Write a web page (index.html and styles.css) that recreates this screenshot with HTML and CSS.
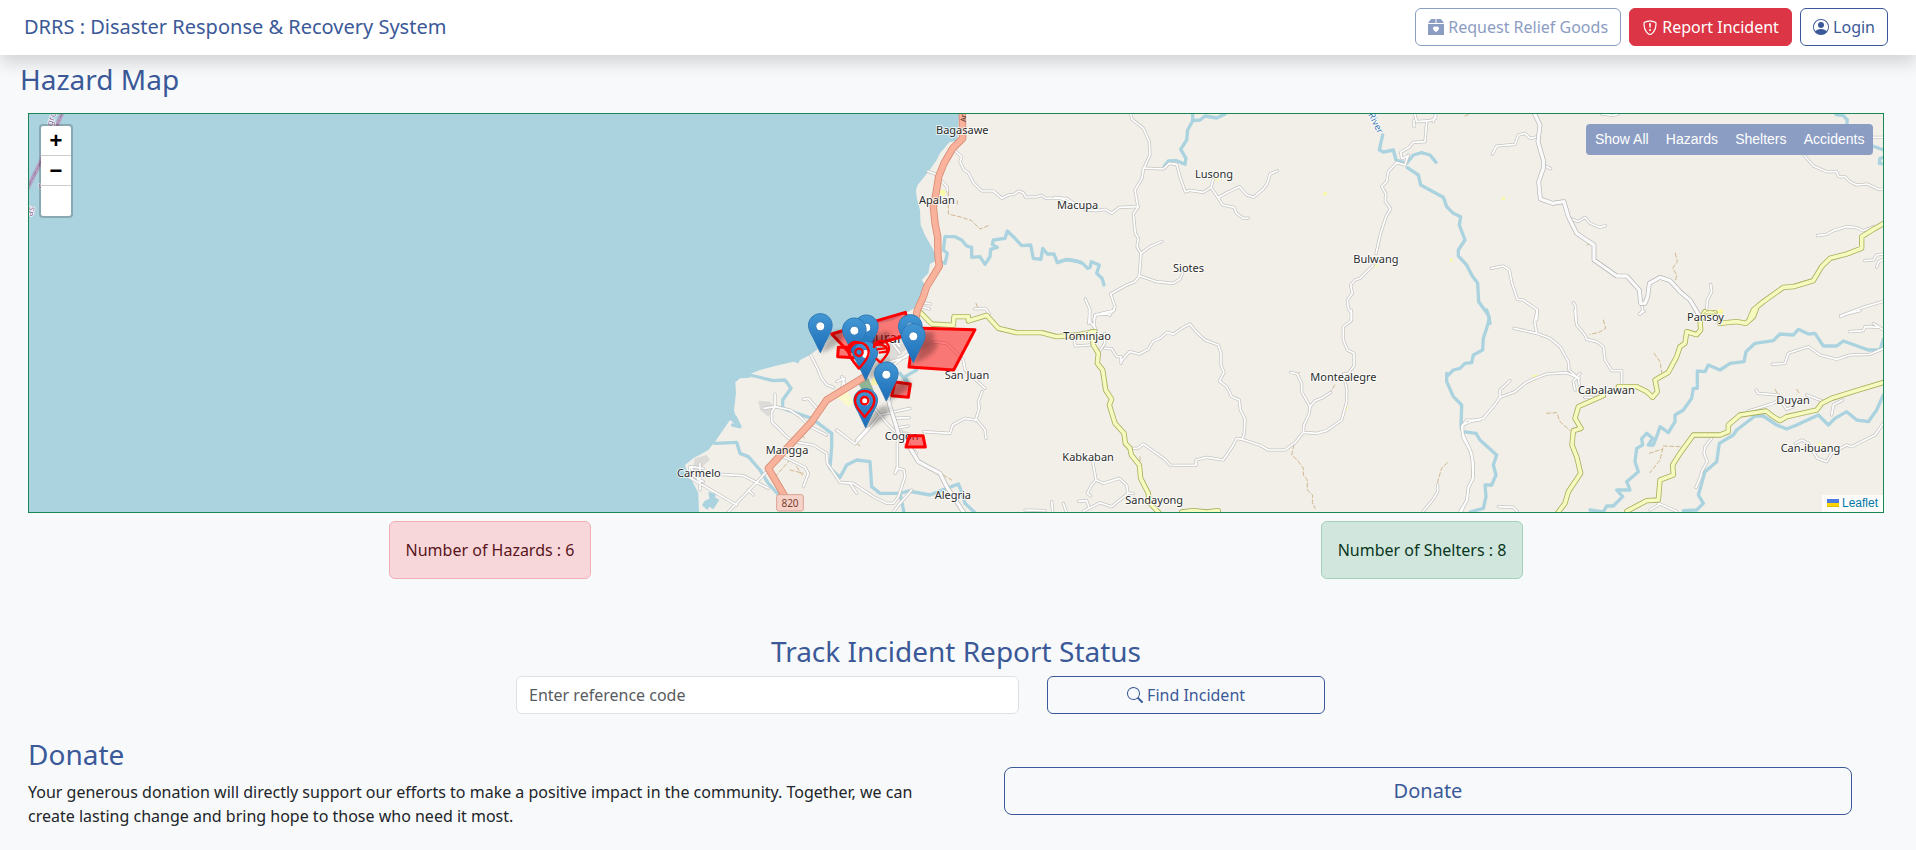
FILE: index.html
```html
<!DOCTYPE html>
<html lang="en">
<head>
<meta charset="utf-8">
<title>DRRS : Disaster Response &amp; Recovery System</title>
<link rel="stylesheet" href="styles.css">
</head>
<body>
<header class="navbar">
  <a class="brand">DRRS : Disaster Response &amp; Recovery System</a>
  <nav class="nav-actions">
    <button class="btn btn-muted"><svg class="icon" viewBox="0 0 16 16"><path fill-rule="evenodd" d="M3.75 0h3.75v4H.1a1.5 1.5 0 0 1 .25-.5L2.6.6A1.5 1.5 0 0 1 3.75 0ZM8.500 0h3.750a1.500 1.500 0 0 1 1.150.6l2.250 2.900q.17.23.25.5H8.500ZM0 5h16v11H0ZM8 7.990c-1.660-1.710-5.820 1.280 0 5.130 5.820-3.850 1.660-6.840 0-5.130Z"/></svg> Request Relief Goods</button>
    <button class="btn btn-danger"><svg class="icon" viewBox="0 0 16 16"><path d="M5.338 1.590a61 61 0 0 0-2.837.856.480.480 0 0 0-.328.390c-.554 4.157.726 7.190 2.253 9.188a10.700 10.700 0 0 0 2.287 2.233c.346.244.652.420.893.533q.180.085.293.118a1 1 0 0 0 .101.025 1 1 0 0 0 .100-.025q.114-.034.294-.118c.240-.113.547-.290.893-.533a10.700 10.700 0 0 0 2.287-2.233c1.527-1.997 2.807-5.031 2.253-9.188a.480.480 0 0 0-.328-.390c-.651-.213-1.750-.560-2.837-.855C9.552 1.290 8.531 1.067 8 1.067c-.530 0-1.552.223-2.662.524z" transform="translate(0 .8)" fill="none" stroke="currentColor" stroke-width="1.200"/><path d="M7.001 11a1 1 0 1 1 2 0 1 1 0 0 1-2 0M7.100 4.995a.905.905 0 1 1 1.800 0l-.350 3.507a.553.553 0 0 1-1.100 0z"/></svg> Report Incident</button>
    <button class="btn btn-outline"><svg class="icon" viewBox="0 0 16 16"><path d="M11 6a3 3 0 1 1-6 0 3 3 0 0 1 6 0"/><path fill-rule="evenodd" d="M0 8a8 8 0 1 1 16 0A8 8 0 0 1 0 8m8-7a7 7 0 0 0-5.468 11.370C3.242 11.226 4.805 10 8 10s4.757 1.225 5.468 2.370A7 7 0 0 0 8 1"/></svg> Login</button>
  </nav>
</header>

<main class="page">
  <h3 class="map-title">Hazard Map</h3>
  <section class="map">
    <svg class="map-canvas" viewBox="-1893 12 5562 1194">
      <defs>
        <linearGradient id="pinFill" x1="0" y1="0" x2="0" y2="1"><stop offset="0" stop-color="#4297d4"/><stop offset="1" stop-color="#1c6cb8"/></linearGradient>
        <filter id="soft" x="-50%" y="-50%" width="200%" height="200%"><feGaussianBlur stdDeviation="7"/></filter>
        <path id="shadow" d="M0 0L18-40Q42-72 66-66Q82-56 60-34Q38-12 0 0Z" filter="url(#soft)" opacity=".26"/>
        <g id="pin">
          <path d="M0-119C-20-119-35.500-103-35.500-84C-35.500-72-29-60-22-48L0-2L22-48C29-60 35.500-72 35.500-84C35.500-103 20-119 0-119Z" fill="url(#pinFill)" stroke="#2e78b5" stroke-width="3"/>
          <circle cy="-81" r="13.500" fill="#fff" stroke="#3079b8" stroke-width="3"/>
        </g>
        <g id="alert">
          <path d="M0 0C-12-16-29-30-29-49C-29-66-16-78 0-78C16-78 29-66 29-49C29-30 12-16 0 0Z"/><circle cy="-49" r="11"/>
        </g>
        <g id="minor">
          <g>
            <path d="M884 122L905 140L900 155L912 180L925 188L940 218L965 243H1000L1026 265L1045 255L1062 253L1076 243L1090 248L1096 261H1130L1145 256L1158 265H1220L1245 282"/>
            <path d="M804 184L826 192L842 210L862 232V243M944 597L976 595L988 612M788 578L812 582M784 590L808 597"/>
          </g>
          <g transform="translate(0 600)">
            <path d="M452 135L470 170L485 205L500 224L520 232M345 252V290L335 305V335L380 380L400 395L460 405L500 430L502 460L540 517L580 520L610 540L640 560L680 580L700 580L715 560L735 500L732 480L715 475L705 490L712 470V400L714 370"/>
            <path d="M312 295L345 290L390 300L420 320L450 350L500 375M430 268L445 265L475 300M530 360L585 402L628 355L660 315L750 295M590 390L625 352M635 285L680 340L715 375M700 325L748 323M705 355L745 348"/>
            <path d="M320 485L205 606M130 475L90 470L85 500L230 585M180 493L250 497L325 535M265 540L280 555M430 530L445 490L435 472L380 445L345 430M120 460V540M88 490L130 515M95 475L115 510M700 606L720 580L755 540M570 520L590 550"/>
            <path d="M790 365L870 370L878 345L915 325L950 330L975 360L978 385M946 332L958 295L955 275L966 245M820 95L860 100L890 130L910 150L915 180L975 235M770 430L740 405M1095 600L1155 602M1175 575L1178 606"/>
            <path d="M665 110L700 90L745 80M680 160L740 140L770 110M690 90L720 130M700 165L760 120M545 200L560 235M530 215L553 205L545 235L565 225M680 70L720 110M720 55L760 80"/>
          </g>
          <g transform="translate(1200 0)">
            <path d="M212 10L216 28L250 55L268 95L270 135L250 178L246 205L225 240L234 292L220 312L226 370L235 385L231 410L243 430L238 497L225 515L200 525L152 552L165 590L160 602L105 615L102 630"/>
            <path d="M250 174L310 177L328 160L350 163L360 200L376 246L390 241L430 247L453 232L460 208M453 232L474 263L500 248L538 230L560 255L580 262L610 237L622 220L630 192L652 183M474 263L488 285L522 292L530 310L550 325L565 324"/>
            <path d="M-15 262L0 264L80 300L108 302L135 298L155 310L178 292L234 290M243 430L270 410L306 394M238 497L290 515L340 520L360 507L368 490M76 567L90 600L86 640M105 615L150 605M135 610L150 616"/>
            <path d="M1064 12L1070 35L1110 32L1127 25V12M1100 38L1095 95L1060 97L1048 112L1022 127L1025 145L1042 140M1045 135L1035 165L1010 158L985 185L980 215L965 230L977 250L976 275L992 296L978 320L962 370L948 430M940 465L900 505L885 510L872 525L877 550L862 570L865 595L875 610L874 630M1062 50V30M1127 12L1120 35"/>
          </g>
          <g transform="translate(1200 600)">
            <path d="M88 0L90 35L108 58M163 0L150 12L105 15L102 45L108 60M134 70V100L120 122M42 88L46 108L90 105M134 115L155 116L170 140H183V160M183 155L208 125L238 132L265 118L278 95L300 85L320 67L340 73L365 55L390 42L408 65L435 90L475 105L483 130V165L492 188L478 213L500 230L515 260L538 270L541 300L555 325L553 370L546 388L530 385L520 405L490 450L440 442L408 450V466L330 465L315 448L250 402L235 414L215 415"/>
            <path d="M874 0V32L850 50V90L862 120L882 130V168L865 190L850 192L860 235V275L845 330L800 362L770 370L730 367L705 398L675 420L625 420L600 406L546 388M730 367L732 345L748 310L750 290L725 245V220L712 192L692 187M750 290L765 272L785 265L812 247"/>
            <path d="M98 455L108 510L95 525L82 550L92 558M108 510L130 520L178 505L200 525L204 550L155 590L120 578L70 604M55 574L80 572L88 595M204 550L220 550M10 580L18 604M1260 330H1220L1205 350L1210 385L1230 420L1240 460L1238 510L1225 530L1222 570L1200 604M1133 525V545L1118 570L1090 604"/>
          </g>
          <g transform="translate(2400 0)">
            <path d="M236 80L210 85L195 70L175 75L165 103L110 108L97 132M250 165L272 176M330 325L355 335L375 322L390 340L418 352L436 347M94 475L130 468L148 480L156 520L172 568L190 570L232 600L230 630M340 577L347 590V630M752 523L755 545L742 570L740 600M1072 377L1100 373L1120 362L1160 350L1190 353L1210 362L1240 350M1032 135L1060 168L1100 185H1130L1136 200H1155L1170 215L1190 225L1222 222L1255 238H1275M1238 82H1270M1214 452L1240 450L1250 435L1272 432M1250 472L1256 455L1270 448M1142 617L1180 603L1210 592L1270 574M425 12L460 16L475 12M545 580L548 600L540 612"/>
          </g>
          <g transform="translate(2400 600)">
            <path d="M162 55L230 70L270 85L300 110L325 155L327 180L355 205L358 225M232 0L224 35L230 70M345 0L350 45L375 75L380 88L410 95L430 110L435 150L455 182L485 182V220M358 205L320 188L260 192L220 207L195 220L165 245L120 262L100 290L70 325L30 335L8 345M150 212L120 240V262M360 190L340 215L345 240M374 262H400M115 590L160 592L172 604M595 580L650 604M570 600L600 582M8 345V370L35 430L40 500L25 535L20 570L5 604"/>
            <path d="M937 163L975 160L985 130L1045 110L1080 135L1130 148L1170 135L1230 133L1272 115M1168 65L1210 62L1215 50L1260 52M1240 40L1270 60M888 240L895 250L955 255M865 303L940 280L955 270M960 270L980 298L1000 290M1040 255L1085 272M1115 315L1120 285L1148 270M1006 400L1025 390L1045 400L1072 445L1100 455L1115 430L1160 405L1175 410L1245 375L1270 340M755 385L735 410L732 430L742 455L725 485L722 500L708 532M538 12L552 4M1142 20L1160 12L1200 2"/>
          </g>
        </g>
        <g id="local">
          <path transform="translate(2400 0)" d="M224 12L240 45L234 95L250 150V175L236 215L241 267L278 280L312 275L325 320L350 370L402 405L402 450L470 498L500 498L538 540L542 580L555 580L563 560L568 520L600 502L630 512L660 545L690 570L715 612"/>
          <path transform="translate(0 600)" d="M680 240L690 290L708 345L716 375L745 405L775 455L840 490L860 530L880 560L910 606"/>
        </g>
        <g id="secondary">
          <path transform="translate(0 600)" d="M782 8L815 42L880 46L882 20H925V33L980 16L1015 55L1070 68H1145L1190 80L1250 75L1305 65"/>
          <path transform="translate(1200 600)" d="M95 65L100 105L115 130L112 160L128 180L137 240L155 268L148 285L165 340L192 370L196 400L210 415L214 435L238 465L242 505L265 550L266 575L300 612M365 606L400 602L440 606L475 602"/>
          <path transform="translate(2400 0)" d="M1272 340L1240 358L1205 380V415L1160 432L1110 445L1085 470L1060 512L1000 530L970 532L910 575L880 600L868 628M722 630L735 608H765"/>
          <path transform="translate(2400 600)" d="M888 0L880 20L858 40L830 35L778 40M735 5L720 30L722 60L710 74L680 65L675 100L660 110L650 140L625 187L585 210L592 245L578 262L560 245L530 230H475M430 257L355 290L345 325L363 355L340 362L336 405L350 440L362 490L345 515L325 545L315 580L292 610M1272 217L1195 240L1115 265L1085 280L1070 300L980 320L960 332L940 320L918 303L840 315L805 345V365L780 375L700 375L660 430L638 465L640 495L600 510L595 570L560 572L500 604"/>
        </g>
        <path id="primary" d="M907 5L908 85L878 115L852 160L836 200L828 250L820 290L825 340L833 380L834 440L838 468L800 530L790 560L772 600L765 640M610 803L500 870L455 935L325 1075L375 1160"/>
      </defs>

      <rect x="-1893" y="12" width="5562" height="1194" fill="#aad3df"/>
      <path d="M898 10L892 92L868 97L840 130L830 150L805 185L773 225L768 240L770 262L780 300L782 345L795 375L820 420L832 450L810 462L805 490L785 510L795 525L790 550L785 572L770 590L745 605L700 630L520 675L482 710L450 735L420 750L415 760L400 755L345 768L300 780L268 793L272 803L240 805L226 817L228 850L222 900L235 950L210 930L165 995L145 1020L100 1045L75 1065L80 1080L100 1120L115 1150L117 1210H3680V5Z" fill="#f2efe9"/>
      <g transform="translate(0 600)">
        <path d="M295 272L330 275L345 295L325 320L300 300ZM105 445L140 435L150 450L120 475L120 525L95 490ZM700 350L770 375L740 395ZM650 100L740 70L760 100L690 160Z" fill="#dddbd8"/>
        <path d="M530 262L560 240L580 275L568 292Z" fill="#fbf8cc"/>
        <path d="M590 210L625 205L642 242L605 240Z" fill="#8fb496"/>
        <path d="M635 205L650 200L655 225L635 225Z" fill="#f8f3aa"/>
        <path d="M145 545L168 552L165 562L178 570L160 598L148 590L142 600L126 586L134 572L148 566Z" fill="#aad3df"/>
      </g>
      <g fill="#fbfaa4"><circle cx="848" cy="248" r="9"/><path d="M1990 247h11v9h-11zM1664 205h14v6h-14zM2142 464h12v6h-12zM2370 446h8v9h-8zM2525 262h10v7h-10zM2052 885l12 3l-4 14l-9-2zM3173 598h16v14h-16zM3473 1000h11v9h-11zM2616 795h18v6h-18z"/></g>

      <g class="river">
        <path d="M840 455L855 460L862 430L850 420L855 380H885L905 390L920 408L935 412V442L960 440L975 463L990 440L992 418L1012 412L997 403L1000 390L1035 385L1042 363L1060 380L1085 407L1112 405L1120 445L1143 448L1148 415L1162 432H1182L1192 458L1215 450L1230 450L1260 456"/>
        <path d="M1200 455L1220 448L1250 453L1268 460L1283 475L1290 472L1294 455L1318 465L1310 490L1326 505L1332 525"/>
        <g transform="translate(0 600)">
          <path d="M270 195L340 212L375 210L393 235L368 270V295L455 325L515 370V410L510 475L540 502L560 465L590 450L630 455L635 530L660 550H720L745 543L810 555L860 535L895 522L905 545L915 580L945 608M720 550L732 608"/>
          <path d="M165 400L230 397L240 430L265 440L300 480L325 520L350 548L360 560M750 160L770 180L735 200L745 220M720 190L740 215M225 320L240 350L218 345"/>
        </g>
        <g transform="translate(1200 0)">
          <path d="M398 12V32L383 60L380 90L362 118L378 145L375 163L350 152L325 153L312 170M398 32L420 30L435 18L470 24L495 12M968 75L958 120L970 126L1000 120L1008 150L1040 160L1060 135L1085 128L1110 135L1128 157M1042 173L1075 195L1082 225L1150 262L1160 290L1180 310L1202 320L1198 345L1215 390L1195 420V438L1220 465L1235 495L1253 520L1256 575L1285 615L1290 640"/>
        </g>
        <g transform="translate(2400 600)">
          <path d="M80 0L88 25L80 55L70 85L68 120L40 135L35 158L15 160L0 175L-20 180L-35 195L-40 190V215L-20 260L5 285L3 350L8 365L48 370L60 390L110 435L100 465L108 495L95 525L75 525L78 560L70 595L30 606"/>
          <path d="M1270 88L1260 120L1225 120L1150 93L1130 108L1090 108L1065 70L1045 72L1015 58L1000 75L960 72L940 92L885 100L858 125L852 155L810 160L780 180L745 165L735 185L712 183V235H700L695 265L670 300L645 315V335L625 368L600 350L590 380L580 405H565L578 385L560 370L545 386L548 405L530 415L525 455L535 485L500 515L510 540L470 540L488 560L460 588H440L430 606L390 600"/>
          <path d="M1270 255L1250 300L1225 335L1190 330L1160 305L1125 325L1105 345L1075 315L1010 345L980 357L950 345L910 318L885 318L830 360L820 375L778 400L770 455L735 485L715 555L730 580L710 600L670 602"/>
        </g>
        <path d="M3528 14L3550 17L3562 30L3560 50M3638 108L3672 120M3672 142L3660 145L3658 160L3672 162"/>
      </g>

      <g class="track">
        <path d="M865 245V312L905 322L935 332L960 357L985 347M948 580L952 590M892 272V282"/>
        <path transform="translate(0 600)" d="M425 375L435 385M345 500L390 450M390 480L430 490M410 470L430 500M590 400L600 408M850 495L875 510"/>
        <path transform="translate(1200 600)" d="M718 187L712 195M824 225L812 245M702 405L695 435L712 450L730 475V495L742 510V540L758 555L757 578L765 595M1162 458L1145 475L1133 515V530M240 440V455"/>
        <path transform="translate(2400 0)" d="M646 430L652 455L638 475L650 495L646 515M392 400L375 408M15 18L25 14"/>
        <path transform="translate(2400 600)" d="M430 30L437 55L415 68L390 73M582 130L600 155L605 187M260 310L290 308L300 335L330 362M660 410L610 408L600 450L570 488M568 430L605 418M945 238L955 255M1010 238L1018 250"/>
      </g>
      <g class="line"><use href="#minor" class="minor-edge"/><use href="#minor" class="minor-fill"/>
      <use href="#local" class="local-edge"/><use href="#local" class="local-fill"/>
      <use href="#secondary" class="sec-edge"/><use href="#secondary" class="sec-fill"/>
      <use href="#primary" class="pri-edge"/><use href="#primary" class="pri-fill"/></g>
      <path d="M3130 612Q3150 590 3170 612Z" fill="#f7fabf" stroke="#b4bb66" stroke-width="2"/>

      <g transform="translate(-1980 -330)">
        <path d="M187 338L170 378L120 490L82 566" fill="none" stroke="#b5a3c4" stroke-width="13"/>
        <path d="M187 338L170 378L120 490L82 566" fill="none" stroke="#8d6f9c" stroke-width="2.500" stroke-dasharray="18 5 4 5"/>
        <g class="boundary"><text transform="translate(156 380) rotate(-72)">gro</text><text transform="translate(96 650) rotate(-72)">as</text><text transform="translate(128 568) rotate(-72)">c</text></g>
      </g>

      <g class="place">
        <text x="828" y="72">Bagasawe</text><text x="777" y="283">Apalan</text><text x="1191" y="297">Macupa</text>
        <text x="1605" y="204">Lusong</text><text x="1539" y="486">Siotes</text><text x="2080" y="458">Bulwang</text>
        <text x="1210" y="690">Tominjao</text><text x="1951" y="814">Montealegre</text><text x="1207" y="1052">Kabkaban</text><text x="1396" y="1183">Sandayong</text>
        <text x="3081" y="632">Pansoy</text><text x="2754" y="852">Cabalawan</text><text x="3349" y="882">Duyan</text><text x="3362" y="1027">Can-ibuang</text>
        <text x="854" y="807">San Juan</text><text x="317" y="1032">Mangga</text><text x="51" y="1102">Carmelo</text><text x="824" y="1167">Alegria</text><text x="674" y="990">Cogon</text>
        <text class="town" x="572" y="699">Tuburan</text>
      </g>
      <rect x="350" y="1154" width="80" height="49" rx="6" fill="#f7d2c8" stroke="#d9a193" stroke-width="3"/>
      <text class="shield" x="390" y="1191">820</text>
      <text class="road-name" transform="translate(917 36) rotate(-88)">Ar</text>
      <text class="river-name" transform="translate(2114 -6) rotate(63)">k River</text>

      <g transform="translate(360 540)">
        <g class="hazard">
          <path d="M155 132L376 67L394 132L206 186Z"/><path d="M402 114L585 119L521 240L387 231Z"/><path d="M175 172H236V204L173 200Z"/><path d="M345 276L391 282L385 322L335 317Z"/><path d="M388 437H429L436 471H378Z"/>
        </g>
        <use href="#shadow" x="121" y="189"/><use href="#shadow" x="259" y="193"/><use href="#shadow" x="223" y="201"/><use href="#shadow" x="257" y="270"/><use href="#shadow" x="319" y="334"/><use href="#shadow" x="257" y="414"/><use href="#shadow" x="391" y="192"/><use href="#shadow" x="400" y="219"/>
        <use href="#pin" x="121" y="190"/><use href="#pin" x="391" y="193"/><use href="#pin" x="259" y="194"/><use href="#pin" x="223" y="203"/><use href="#pin" x="400" y="220"/><use href="#pin" x="257" y="273"/><use href="#pin" x="319" y="335"/><use href="#pin" x="257" y="415"/>
        <g class="incident">
          <path d="M237 236C226 218 202 200 204 178C206 158 222 153 238 158"/><use href="#alert" x="237" y="236"/><use href="#alert" x="254" y="381"/>
          <path d="M301 218C313 205 327 190 327 177C327 158 312 151 300 153C288 156 281 162 282 174M290 160L318 170L322 185L296 188M285 166C300 160 315 165 322 178M301 218L288 205M290 178L315 175"/>
        </g>
      </g>
    </svg>
    <div class="zoom-control"><a>+</a><a>−</a><a></a></div>
    <div class="filters"><a>Show All</a><a>Hazards</a><a>Shelters</a><a>Accidents</a></div>
    <div class="attribution"><svg class="flag" viewBox="0 0 12 8"><path fill="#4c7be1" d="M0 0h12v4H0z"/><path fill="#ffd500" d="M0 4h12v3H0z"/><path fill="#e0bc00" d="M0 7h12v1H0z"/></svg> Leaflet</div>
  </section>

  <section class="counts">
    <div class="count-col"><div class="alert alert-danger">Number of Hazards : 6</div></div>
    <div class="count-col"><div class="alert alert-success">Number of Shelters : 8</div></div>
  </section>

  <section class="track-report">
    <h3>Track Incident Report Status</h3>
    <div class="track-form">
      <input class="field" type="text" placeholder="Enter reference code">
      <button class="btn btn-outline find"><svg class="icon" viewBox="0 0 16 16"><path d="M11.742 10.344a6.500 6.500 0 1 0-1.397 1.398h-.001q.044.060.098.115l3.850 3.850a1 1 0 0 0 1.415-1.414l-3.850-3.850a1 1 0 0 0-.115-.100zM12 6.500a5.500 5.500 0 1 1-11 0 5.500 5.500 0 0 1 11 0"/></svg> Find Incident</button>
    </div>
  </section>

  <section class="donate">
    <div class="donate-copy">
      <h3>Donate</h3>
      <p>Your generous donation will directly support our efforts to make a positive impact in the community. Together, we can create lasting change and bring hope to those who need it most.</p>
    </div>
    <button class="btn btn-outline btn-lg">Donate</button>
  </section>
</main>
</body>
</html>
```
FILE: styles.css
```css
*, *::before, *::after { box-sizing: border-box; }
body { margin: 0; height: 850px; overflow: hidden; background: #f8f9fb; color: #212529; font: 400 16px/1.5 "Noto Sans", sans-serif; }
h3 { margin: 0 0 8px; font-size: 28px; line-height: 1.2; font-weight: 400; color: #3b5998; }

.navbar { position: relative; display: flex; justify-content: space-between; align-items: center; height: 55px; padding: 0 28px 1px 24px; background: #fff; box-shadow: 0 8px 16px rgba(0, 0, 0, .15); }
.brand { font-size: 20px; color: #3b5998; }
.nav-actions { display: flex; gap: 8px; }
.btn { height: 38px; padding: 6px 12px; border: 1px solid #3b5998; border-radius: 6px; background: transparent; color: #3b5998; font: inherit; line-height: 24px; white-space: nowrap; }
.btn-muted { border-color: #8b9dc3; color: #8b9dc3; }
.btn-danger { border-color: #dc3545; background: #dc3545; color: #fff; }
.btn-lg { height: 48px; font-size: 20px; line-height: 30px; padding: 8px 16px; border-radius: 8px; }
.icon { width: 16px; height: 16px; fill: currentColor; vertical-align: -2px; }

.page { padding: 8px 32px 0 28px; }
.map-title { margin-left: -8px; margin-bottom: 16.400px; }
.map { position: relative; height: 400px; border: 1px solid #198754; overflow: hidden; background: #aad3df; }
.map-canvas { display: block; width: 100%; height: 100%; }

.line, .river, .track { fill: none; stroke-linejoin: round; stroke-linecap: round; }
.river { stroke: #aad3df; stroke-width: 10; }
.track { stroke: #c9ac7c; stroke-width: 2.500; stroke-dasharray: 12 7; }
.minor-edge { stroke: #c6c5c3; stroke-width: 9.500; }
.minor-fill { stroke: #fff; stroke-width: 5; }
.local-edge { stroke: #b5b5b5; stroke-width: 14; }
.local-fill { stroke: #fafafa; stroke-width: 10; }
.sec-edge { stroke: #a8b05e; stroke-width: 16; }
.sec-fill { stroke: #f7fabf; stroke-width: 11; }
.pri-edge { stroke: #d98b73; stroke-width: 22; }
.pri-fill { stroke: #f9b29c; stroke-width: 17; }
.place text, .shield, .road-name, .river-name, .boundary text { font-family: "Noto Sans", sans-serif; }
.place text { font-size: 33px; fill: #2b2b2b; stroke: #fff; stroke-opacity: .75; stroke-width: 6; stroke-linejoin: round; paint-order: stroke; }
.place .town { font-size: 42px; }
.shield { font-size: 30px; fill: #7b4133; text-anchor: middle; }
.road-name { font-size: 22px; fill: #40221a; }
.river-name { font-size: 28px; fill: #4079b5; stroke: #fff; stroke-width: 4; paint-order: stroke; }
.boundary text { font-size: 28px; fill: #8d6f9c; stroke: #fff; stroke-width: 4; paint-order: stroke; }
.hazard { fill: red; fill-opacity: .5; stroke: red; stroke-width: 9; stroke-linejoin: round; }
.incident { fill: none; stroke: red; stroke-width: 7; stroke-linejoin: round; }

.zoom-control { position: absolute; left: 10px; top: 10px; width: 34px; border: 2px solid rgba(0, 0, 0, .2); border-radius: 4px; background: #fff; background-clip: padding-box; }
.zoom-control a { display: block; height: 30px; border-bottom: 1px solid #ccc; color: #000; font: bold 22px/30px "Liberation Sans", sans-serif; text-align: center; }
.zoom-control a:last-child { border-bottom: 0; }
.filters { position: absolute; right: 10px; top: 10px; display: flex; height: 31px; border-radius: 4px; background: #8b9dc3; color: #fff; font: 14px/21px "Liberation Sans", sans-serif; }
.filters a { padding: 5px 8.600px; }
.attribution { position: absolute; right: 0; bottom: 0; height: 17px; padding: 0 5px; background: rgba(255, 255, 255, .8); color: #0078a8; font: 12px/17px "Liberation Sans", sans-serif; }
.flag { width: 12px; height: 8px; }

.counts { display: flex; margin: 8px -4px 0; }
.count-col { flex: 1; display: flex; justify-content: center; }
.alert { height: 58px; padding: 16px; border: 1px solid; border-radius: 6px; }
.alert-danger { background: #f8d7da; border-color: #f1aeb5; color: #58151c; }
.alert-success { background: #d1e7dd; border-color: #a3cfbb; color: #0a3622; }

.track-report { margin-top: 56px; text-align: center; }
.track-report h3 { margin-bottom: 7px; }
.track-form { display: flex; gap: 28px; padding-left: 488px; }
.field { width: 503px; height: 38px; padding: 6px 12px; border: 1px solid #dee2e6; border-radius: 6px; background: #fff; font: inherit; color: #212529; }
.field::placeholder { color: #595c5f; opacity: 1; }
.find { width: 278px; }

.donate { display: flex; align-items: flex-start; margin-top: 24px; }
.donate-copy { width: 976px; padding-right: 60px; }
.donate-copy p { margin: 9px 0 0; }
.donate .btn { width: 848px; margin-top: 29px; }
```
